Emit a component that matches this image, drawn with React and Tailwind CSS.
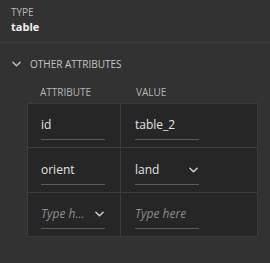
import React from 'react';

const Chevron = ({ className }) => (
  <svg viewBox="0 0 10 6" className={className} fill="none" stroke="currentColor" strokeWidth="1.6" strokeLinecap="round" strokeLinejoin="round">
    <path d="M1 1l4 4 4-4" />
  </svg>
);

const Field = ({ children, placeholder, select }) => (
  <div className="w-[64px] border-b border-[#5a5a5a] pb-[5px] flex items-center justify-between leading-[18px] text-[12px]">
    {children ? (
      <span className="text-[#e2e2e2]">{children}</span>
    ) : (
      <span className="italic text-[#8c8c8c] truncate">{placeholder}</span>
    )}
    {select && <Chevron className="w-[9px] h-[6px] shrink-0 text-[#cfcfcf] mr-[1px]" />}
  </div>
);

const rows = [
  { h: 'h-[43px]', attr: 'id', value: 'table_2' },
  { h: 'h-[45px]', attr: 'orient', value: 'land', valueSelect: true },
  { h: 'h-[44px]', attr: null, value: null, attrSelect: true },
];

export default function App() {
  return (
    <div className="w-[270px] h-[263px] bg-[#323232] text-[#d8d8d8] font-['Open_Sans',sans-serif] overflow-hidden">
      {/* Type */}
      <div className="h-[43px] border-b border-[#3d3d3d] px-[11px] pt-[6px]">
        <div className="text-[10px] leading-[12px] text-[#b9b9b9]">TYPE</div>
        <div className="text-[11px] leading-[14px] font-bold text-[#eeeeee] mt-[2px]">table</div>
      </div>

      {/* Other attributes */}
      <div className="flex items-center h-[14px] mt-[14px] px-[12px] gap-[9px]">
        <Chevron className="w-[9px] h-[6px] text-[#bdbdbd]" />
        <span className="text-[10px] leading-[12px] text-[#c4c4c4]">OTHER ATTRIBUTES</span>
      </div>

      <div className="flex mt-[15px] h-[12px] text-[10px] leading-[12px] text-[#b5b5b5]">
        <span className="ml-[40px] w-[96px]">ATTRIBUTE</span>
        <span>VALUE</span>
      </div>

      <div className="ml-[27px] mt-[5px] w-[231px] border border-[#3b3b3b] bg-[#262626]">
        {rows.map((r, i) => (
          <div key={i} className={`flex ${r.h} ${i > 0 ? 'border-t border-[#3b3b3b]' : ''}`}>
            <div className="w-[93px] border-r border-[#3b3b3b] px-[13px] flex items-end pb-[7px]">
              <Field placeholder="Type h..." select={r.attrSelect}>{r.attr}</Field>
            </div>
            <div className="flex-1 px-[14px] flex items-end pb-[7px]">
              <Field placeholder="Type here" select={r.valueSelect}>{r.value}</Field>
            </div>
          </div>
        ))}
      </div>
    </div>
  );
}
